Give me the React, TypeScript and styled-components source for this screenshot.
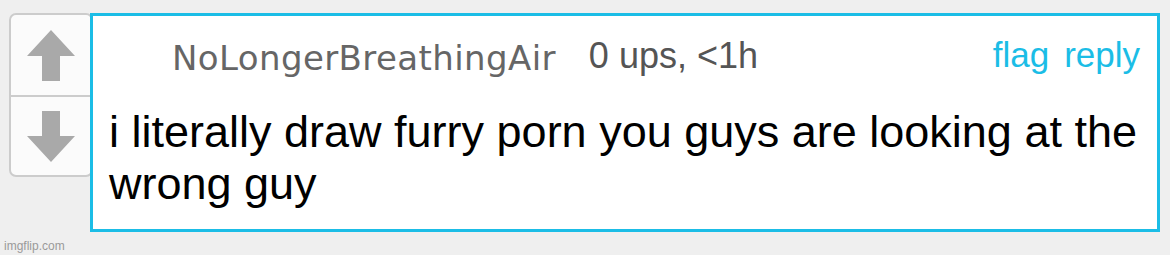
import React from "react";
import styled, { createGlobalStyle } from "styled-components";

const Global = createGlobalStyle`
  html, body { margin: 0; padding: 0; }
  body {
    background: #efefef;
    font-family: "Liberation Sans", Arial, sans-serif;
    width: 1170px;
    height: 255px;
    overflow: hidden;
  }
`;

const Page = styled.div`
  padding: 13px 0 0 9px;
  display: flex;
  flex-direction: column;
  height: 255px;
  box-sizing: border-box;
`;

const Row = styled.div`
  display: flex;
  align-items: flex-start;
`;

const VoteBox = styled.div`
  width: 84px;
  height: 164px;
  box-sizing: border-box;
  border: 2px solid #cccccc;
  border-radius: 7px;
  background: #fbfbfb;
  display: flex;
  flex-direction: column;
  flex-shrink: 0;
`;

const VoteCell = styled.div<{ $top?: boolean }>`
  flex: ${(p) => (p.$top ? "0 0 80px" : "1")};
  display: flex;
  align-items: center;
  justify-content: center;
  border-bottom: ${(p) => (p.$top ? "2px solid #cccccc" : "none")};
`;

const CommentBox = styled.div`
  position: relative;
  z-index: 1;
  margin-left: -3px;
  width: 1070px;
  height: 219px;
  box-sizing: border-box;
  border: 3px solid #1bbde6;
  background: #ffffff;
  display: flex;
  flex-direction: column;
  padding: 19px 17px 0 16px;
`;

const Header = styled.div`
  display: flex;
  align-items: baseline;
  height: 40px;
  line-height: 40px;
`;

const AvatarSpace = styled.div`
  width: 63px;
  flex-shrink: 0;
`;

const Username = styled.span`
  font-family: "DejaVu Sans", Verdana, sans-serif;
  font-size: 34px;
  letter-spacing: 0.4px;
  color: #666666;
  margin-right: 33px;
  position: relative;
  top: 3px;
`;

const Meta = styled.span`
  font-size: 36px;
  color: #555555;
  position: relative;
  top: 1px;
`;

const Spacer = styled.div`
  flex: 1;
`;

const Link = styled.a`
  font-size: 35px;
  color: #1bbde6;
  text-decoration: none;
  margin-left: 15px;
`;

const Body = styled.div`
  margin-top: 31px;
  font-size: 45px;
  line-height: 52px;
  color: #000000;
`;

const Watermark = styled.div`
  margin-top: 7px;
  margin-left: -5px;
  font-size: 12px;
  color: #9a9a9a;
`;

const Arrow = ({ down }: { down?: boolean }) => (
  <svg
    width="48"
    height="51"
    viewBox="0 0 48 51"
    style={down ? { transform: "rotate(180deg)" } : undefined}
  >
    <polygon points="24,0 48,26 33,26 33,51 15,51 15,26 0,26" fill="#a9a9a9" />
  </svg>
);

export default function App() {
  return (
    <>
      <Global />
      <Page>
        <Row>
          <VoteBox>
            <VoteCell $top>
              <Arrow />
            </VoteCell>
            <VoteCell>
              <Arrow down />
            </VoteCell>
          </VoteBox>
          <CommentBox>
            <Header>
              <AvatarSpace />
              <Username>NoLongerBreathingAir</Username>
              <Meta>0 ups, &lt;1h</Meta>
              <Spacer />
              <Link>flag</Link>
              <Link>reply</Link>
            </Header>
            <Body>i literally draw furry porn you guys are looking at the wrong guy</Body>
          </CommentBox>
        </Row>
        <Watermark>imgflip.com</Watermark>
      </Page>
    </>
  );
}
